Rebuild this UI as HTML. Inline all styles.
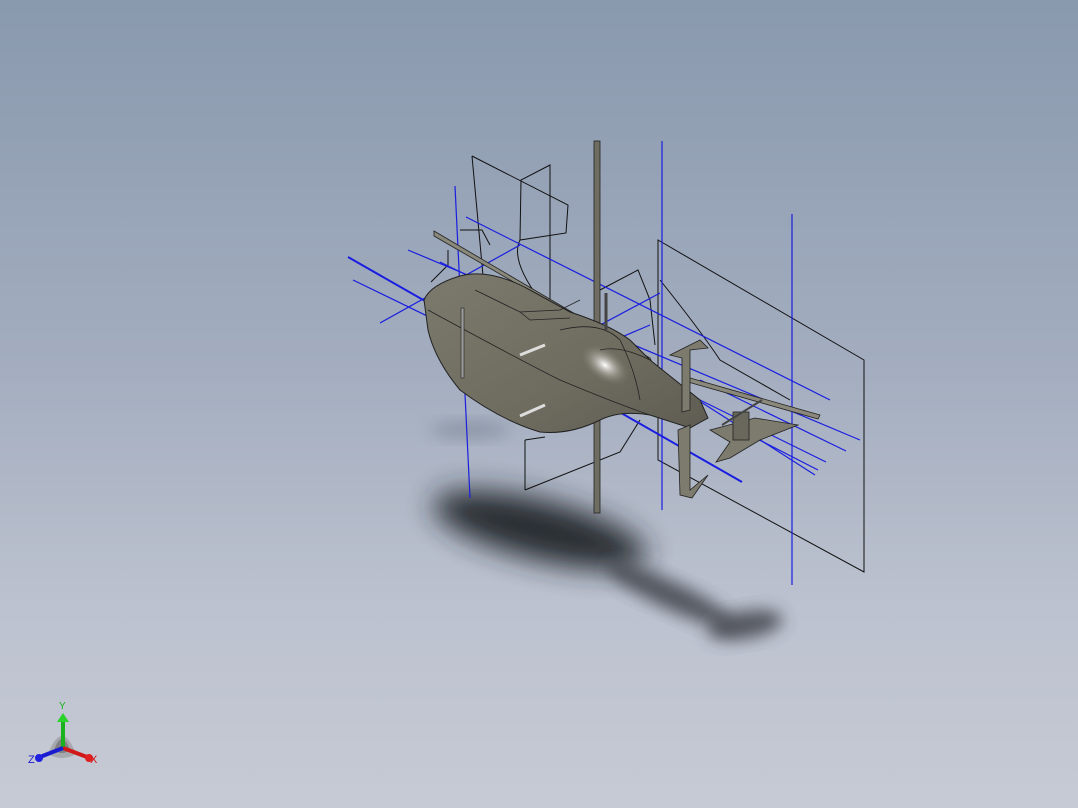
<!DOCTYPE html>
<html><head><style>
html,body{margin:0;padding:0}
body{width:1078px;height:808px;overflow:hidden;background:linear-gradient(180deg,#8999ae 0%,#a3adbf 45%,#bcc2cf 75%,#c6cad4 100%);font-family:"Liberation Sans",sans-serif}
svg{position:absolute;left:0;top:0}
</style></head><body>
<svg width="1078" height="808" viewBox="0 0 1078 808">
<defs>
<filter id="bl" x="-50%" y="-50%" width="200%" height="200%"><feGaussianBlur stdDeviation="14"/></filter>
<filter id="bl2" x="-50%" y="-50%" width="200%" height="200%"><feGaussianBlur stdDeviation="8"/></filter>
<linearGradient id="body" x1="0" y1="0" x2="1" y2="1">
<stop offset="0" stop-color="#7c7a6c"/><stop offset="0.6" stop-color="#6e6c5f"/><stop offset="1" stop-color="#5e5c52"/></linearGradient>
<radialGradient id="hl" cx="0.5" cy="0.5" r="0.5"><stop offset="0" stop-color="#fff"/><stop offset="1" stop-color="#7a786a" stop-opacity="0"/></radialGradient>
</defs>
<!-- shadow -->
<ellipse cx="540" cy="530" rx="110" ry="30" transform="rotate(14 540 530)" fill="#24262c" filter="url(#bl)" opacity="0.95"/>
<ellipse cx="670" cy="595" rx="70" ry="14" transform="rotate(25 670 595)" fill="#3a3d45" filter="url(#bl2)" opacity="0.8"/>
<ellipse cx="745" cy="625" rx="38" ry="14" transform="rotate(-10 745 625)" fill="#3a3d45" filter="url(#bl2)" opacity="0.8"/>
<ellipse cx="470" cy="430" rx="40" ry="8" fill="#6b7586" filter="url(#bl2)" opacity="0.5"/>
<!-- black sketch planes -->
<g fill="none" stroke="#111" stroke-width="1">
<path d="M472 156 L568 205 L566 233 L520 240 L521 180 L550 165 L550 300"/>
<path d="M472 156 L488 330"/>
<path d="M658 240 L864 360 L864 572 L658 460 Z"/>
<path d="M520 240 Q510 260 540 300 L560 330"/>
<path d="M525 490 L620 452 L640 420"/>
<path d="M525 440 L525 490"/>
<path d="M525 440 L545 437"/>
<path d="M600 290 L638 270 L650 300 L655 345"/>
<path d="M660 280 Q700 330 720 360 L790 400"/>
<path d="M431 282 L448 265 L448 250"/>
<path d="M460 230 L482 230 L490 245"/>
</g>
<!-- blue lines -->
<g stroke="#1a1ee0" stroke-width="1.2" fill="none">
<path d="M348 257 L742 482" stroke-width="2"/>
<path d="M353 280 L600 400"/>
<path d="M380 323 L520 245"/>
<path d="M408 250 L860 440"/>
<path d="M466 217 L830 400"/>
<path d="M455 186 L470 498"/>
<path d="M662 141 L662 510"/>
<path d="M792 214 L792 585"/>
<path d="M440 262 L620 350"/>
<path d="M700 380 L846 451"/>
<path d="M690 395 L815 475"/>
<path d="M700 400 L826 462"/>
<path d="M490 384 L660 293"/>
<path d="M495 398 L515 386"/>
<path d="M540 395 L560 380"/>
<path d="M610 342 L650 325"/>
<path d="M740 430 L818 470"/>
</g>
<!-- mast -->
<rect x="594" y="141" width="6" height="372" fill="#6f6d62" stroke="#222" stroke-width="0.8"/>
<!-- rotor blade -->
<path d="M434 231 L650 358 L652 362 L434 236 Z" fill="#8a887a" stroke="#222" stroke-width="0.8"/>
<path d="M690 378 L820 415 L818 419 L688 382 Z" fill="#8a887a" stroke="#222" stroke-width="0.8"/>
<!-- fuselage -->
<path d="M424 300 Q430 285 460 276 Q490 268 530 290 L570 312 Q610 325 630 340 L650 360 L700 400 L708 418 L690 428 L650 415 Q620 410 600 420 Q570 435 540 432 Q500 420 460 390 Q435 360 428 330 Z" fill="url(#body)" stroke="#222" stroke-width="1"/>
<ellipse cx="605" cy="365" rx="28" ry="16" fill="url(#hl)" transform="rotate(35 605 365)"/>
<g fill="none" stroke="#222" stroke-width="0.8">
<path d="M428 310 Q520 360 560 380 Q620 405 650 415"/>
<path d="M475 290 L520 312 L560 310 L580 300"/>
<path d="M520 312 L530 320 L570 318"/>
<path d="M560 330 Q600 320 620 340 Q635 370 640 400"/>
<path d="M600 350 Q620 345 650 360"/>
</g>
<rect x="461" y="308" width="3" height="70" fill="#999" stroke="#222" stroke-width="0.6"/>
<path d="M520 355 L545 345" stroke="#ddd" stroke-width="3"/>
<path d="M520 416 L545 405" stroke="#ddd" stroke-width="3"/>
<!-- tail fins -->
<path d="M670 355 L700 340 L708 348 L690 350 L690 410 L682 412 L682 358 Z" fill="#7d7b6d" stroke="#222" stroke-width="0.8"/>
<path d="M678 430 L690 425 L690 490 L708 475 L692 498 L680 495 Z" fill="#7d7b6d" stroke="#222" stroke-width="0.8"/>
<!-- tail rotor -->
<path d="M710 430 L755 418 L798 425 L760 440 L730 458 L716 462 L730 442 Z" fill="#7d7b6d" stroke="#222" stroke-width="0.8"/>
<rect x="733" y="412" width="16" height="28" fill="#6a685c" stroke="#222" stroke-width="0.8"/>
<path d="M722 425 L762 400" stroke="#444" stroke-width="2"/>
<path d="M606 293 L606 330" stroke="#444" stroke-width="3"/>
<!-- triad -->
<g>
<path d="M48 754 Q62 718 76 754 Q62 762 48 754 Z" fill="#8a8a8a" opacity="0.5"/>
<path d="M54 750 Q62 728 70 750 Q62 756 54 750 Z" fill="#666" opacity="0.6"/>
<rect x="61" y="720" width="4" height="28" fill="#1ab21a"/>
<path d="M57 722 L63 713 L69 722 Z" fill="#2ad22a"/>
<path d="M63 748 L87 757" stroke="#d01818" stroke-width="4"/>
<circle cx="89" cy="758" r="4" fill="#e02020"/>
<path d="M63 748 L40 757" stroke="#1a1ad0" stroke-width="4"/>
<circle cx="39" cy="758" r="4" fill="#2020e0"/>
<text x="59" y="709" font-size="10" fill="#1ab21a">Y</text>
<text x="90" y="763" font-size="11" fill="#d01818">X</text>
<text x="28" y="763" font-size="11" fill="#1a1ad0">Z</text>
</g>
</svg>
</body></html>
